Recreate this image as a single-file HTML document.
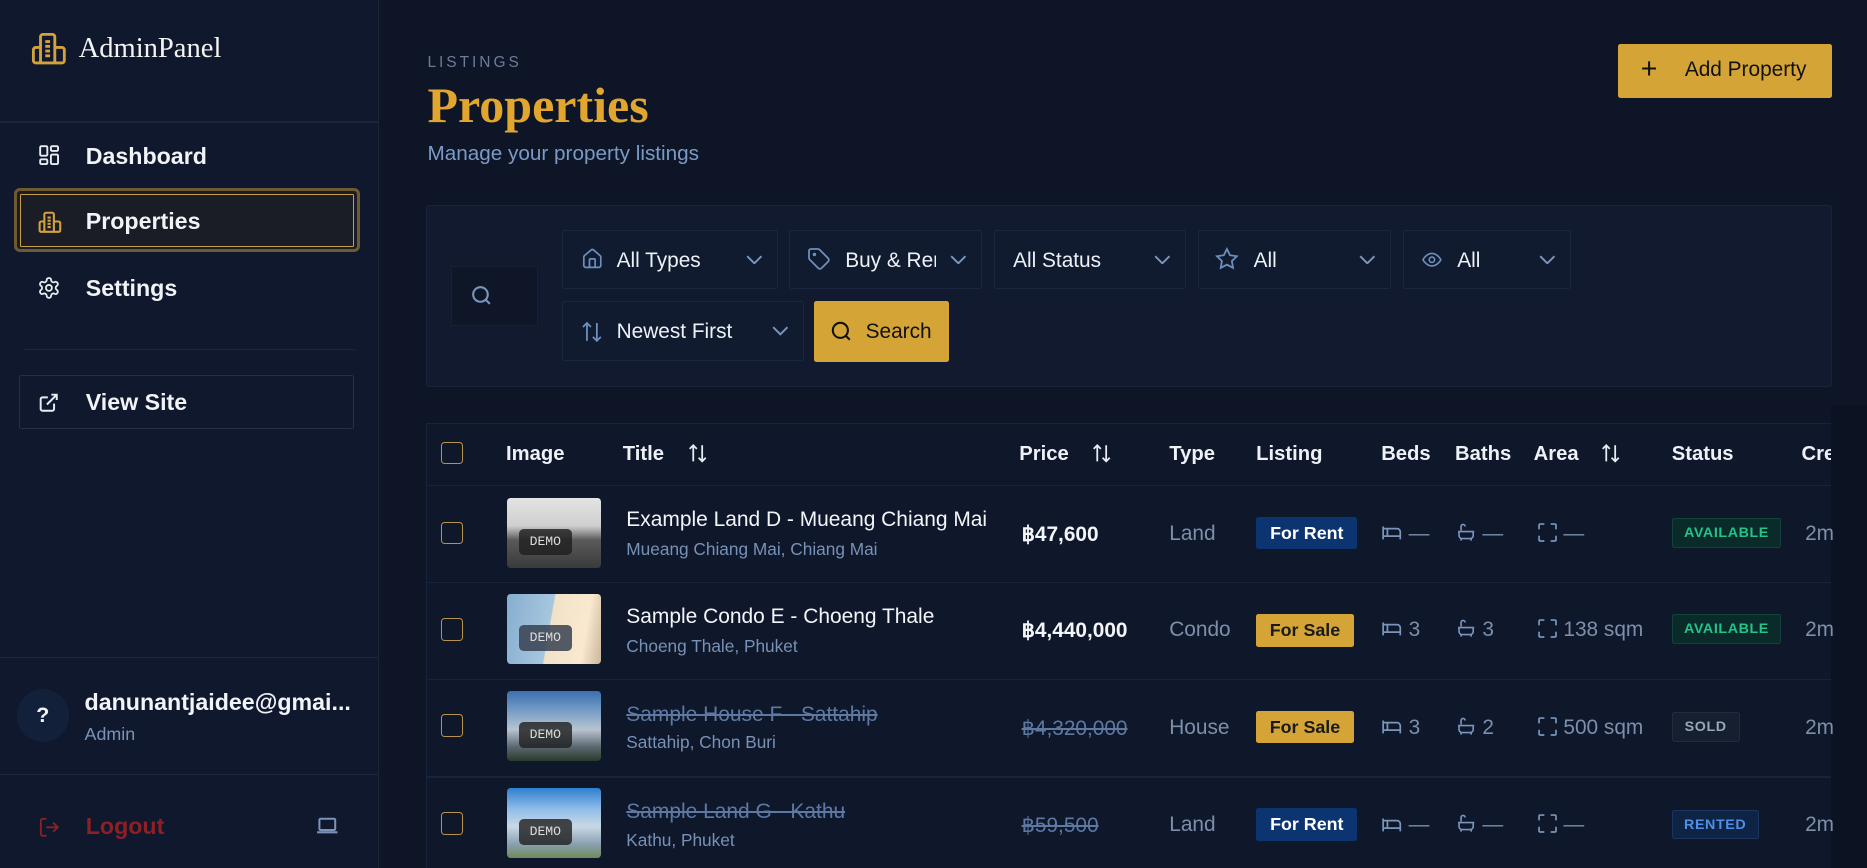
<!DOCTYPE html>
<html><head><meta charset="utf-8"><style>
html{zoom:1.19069}
*{box-sizing:border-box;margin:0;padding:0}
body{width:1568px;height:729px;overflow:hidden;background:#0d1527;font-family:"Liberation Sans",sans-serif;color:#f1f4f9;position:relative}
.a{position:absolute}
.side{left:0;top:0;width:318px;height:729px;background:#0f182c;border-right:1px solid #1b2539}
.hr{position:absolute;height:1px;background:#1c2639}
.nav{position:absolute;left:72px;font-size:19.5px;font-weight:bold;color:#f1f3f7}
.ic{position:absolute}
.mut{color:#7b93b8}
.dd{position:absolute;height:50px;border:1px solid #1b2640;background:#111b30;border-radius:2px;font-size:17.5px;color:#eef2f8}
.dd span{position:absolute;top:15px}
.dd svg.ch{position:absolute;right:12px;top:20px}
.th{position:absolute;top:372px;font-size:17px;font-weight:bold;color:#eef2f8}
.cb{position:absolute;left:370px;width:19px;height:19px;border:1.5px solid #b8914a;border-radius:3px}
.thumb{position:absolute;left:426px;width:79px;height:59px;border-radius:3px;overflow:hidden}
.demo{position:absolute;left:10px;top:26px;width:44px;height:22px;background:rgba(30,30,30,.8);border-radius:4px;color:#ddd;font-family:"Liberation Mono",monospace;font-size:11px;text-align:center;line-height:22px}
.t1{position:absolute;left:526px;font-size:17.6px;color:#f3f5f9}
.t2{position:absolute;left:526px;font-size:14.5px;color:#7891b6}
.pr{position:absolute;left:858px;font-size:17.5px;font-weight:bold;color:#f3f5f9}
.strike{text-decoration:line-through;color:#5d79a3 !important;font-weight:normal}
.ty{position:absolute;left:982px;font-size:17.5px;color:#7d8fab}
.lb{position:absolute;left:1055px;height:27px;border-radius:2px;font-size:15px;font-weight:bold;line-height:27px;text-align:center}
.rent{background:#0b3470;color:#fff;width:85px}
.sale{background:#d4a437;color:#1a1a1a;width:82px}
.val{position:absolute;font-size:17.5px;color:#7d8fab}
.st{position:absolute;left:1404px;height:25px;border-radius:2px;font-size:12px;font-weight:bold;line-height:25px;text-align:center;letter-spacing:.5px}
.cr{position:absolute;left:1516px;font-size:17.5px;color:#7d8fab}
.rowline{position:absolute;left:358px;width:1180px;height:1px;background:#19233a}
</style></head><body>
<div class="a side"></div>
<svg class="ic" style="left:26px;top:27px" width="30" height="28" viewBox="0 0 30 28" fill="none" stroke="#d3a23d" stroke-width="2.4" stroke-linejoin="round"><path d="M8 26V4a2 2 0 0 1 2-2h8a2 2 0 0 1 2 2v22"/><path d="M8 13H4a2 2 0 0 0-2 2v9a2 2 0 0 0 2 2h22a2 2 0 0 0 2-2v-9a2 2 0 0 0-2-2h-6"/><path d="M12 8h4M12 12h4M12 16h4M12 20h4"/></svg>
<div class="a" style="left:66px;top:28px;font-family:'Liberation Serif',serif;font-size:24px;color:#f3f3f3">AdminPanel</div>
<div class="hr" style="left:0;top:102px;width:318px"></div>
<svg class="ic" style="left:33px;top:122px" width="17" height="17" viewBox="0 0 17 17" fill="none" stroke="#e8ecf3" stroke-width="1.6"><rect x="1" y="1" width="6" height="8" rx="1"/><rect x="10" y="1" width="6" height="4" rx="1"/><rect x="10" y="8" width="6" height="8" rx="1"/><rect x="1" y="12" width="6" height="4" rx="1"/></svg>
<div class="nav" style="top:120px">Dashboard</div>
<div class="a" style="left:12px;top:158px;width:290px;height:54px;border:3px solid #6d5a30;border-radius:5px;background:#1a1d26"><div style="position:absolute;inset:2px;border:1px solid #c9a04a;border-radius:1px"></div></div>
<svg class="ic" style="left:32px;top:177px" width="20" height="19" viewBox="0 0 30 28" fill="none" stroke="#d3a23d" stroke-width="2.6"><path d="M8 26V4a2 2 0 0 1 2-2h8a2 2 0 0 1 2 2v22"/><path d="M8 13H4a2 2 0 0 0-2 2v9a2 2 0 0 0 2 2h22a2 2 0 0 0 2-2v-9a2 2 0 0 0-2-2h-6"/><path d="M12 8h4M12 12h4M12 16h4M12 20h4"/></svg>
<div class="nav" style="top:175px">Properties</div>
<svg class="ic" style="left:31px;top:232px" width="20" height="20" viewBox="0 0 24 24" fill="none" stroke="#e8ecf3" stroke-width="1.8"><path d="M12.22 2h-.44a2 2 0 0 0-2 2v.18a2 2 0 0 1-1 1.73l-.43.25a2 2 0 0 1-2 0l-.15-.08a2 2 0 0 0-2.73.73l-.22.38a2 2 0 0 0 .73 2.73l.15.1a2 2 0 0 1 1 1.72v.51a2 2 0 0 1-1 1.740l-.15.09a2 2 0 0 0-.73 2.73l.22.38a2 2 0 0 0 2.73.73l.15-.08a2 2 0 0 1 2 0l.43.25a2 2 0 0 1 1 1.73V20a2 2 0 0 0 2 2h.44a2 2 0 0 0 2-2v-.18a2 2 0 0 1 1-1.73l.43-.25a2 2 0 0 1 2 0l.15.08a2 2 0 0 0 2.73-.73l.22-.39a2 2 0 0 0-.73-2.73l-.15-.08a2 2 0 0 1-1-1.74v-.5a2 2 0 0 1 1-1.74l.15-.09a2 2 0 0 0 .73-2.73l-.22-.38a2 2 0 0 0-2.730-.73l-.15.08a2 2 0 0 1-2 0l-.43-.25a2 2 0 0 1-1-1.73V4a2 2 0 0 0-2-2z"/><circle cx="12" cy="12" r="3"/></svg>
<div class="nav" style="top:231px">Settings</div>
<div class="hr" style="left:20px;top:293px;width:278px"></div>
<div class="a" style="left:16px;top:315px;width:281px;height:45px;border:1px solid #253047;border-radius:2px"></div>
<svg class="ic" style="left:32px;top:329px" width="18" height="18" viewBox="0 0 24 24" fill="none" stroke="#e8ecf3" stroke-width="2.2"><path d="M15 3h6v6M10 14 21 3M18 13v6a2 2 0 0 1-2 2H5a2 2 0 0 1-2-2V8a2 2 0 0 1 2-2h6"/></svg>
<div class="nav" style="top:327px">View Site</div>
<div class="hr" style="left:0;top:552px;width:318px"></div>
<div class="a" style="left:14px;top:579px;width:44px;height:44px;border-radius:50%;background:#13203a;text-align:center;line-height:44px;font-weight:bold;font-size:18px">?</div>
<div class="a" style="left:71px;top:579px;font-size:19.5px;font-weight:bold">danunantjaidee@gmai...</div>
<div class="a mut" style="left:71px;top:608px;font-size:15px">Admin</div>
<div class="hr" style="left:0;top:650px;width:318px"></div>
<svg class="ic" style="left:32px;top:685px" width="19" height="19" viewBox="0 0 24 24" fill="none" stroke="#8e1f24" stroke-width="2"><path d="M9 21H5a2 2 0 0 1-2-2V5a2 2 0 0 1 2-2h4M16 17l5-5-5-5M21 12H9"/></svg>
<div class="a" style="left:72px;top:683px;font-size:19.5px;font-weight:bold;color:#8e1f24">Logout</div>
<svg class="ic" style="left:265px;top:685px" width="19" height="16" viewBox="0 0 20 16" fill="none" stroke="#7b93b8" stroke-width="1.8"><rect x="3" y="2" width="14" height="10" rx="1"/><path d="M1 14h18"/></svg>

<div class="a" style="left:359px;top:45px;font-size:13px;letter-spacing:2.5px;color:#6b7b98">LISTINGS</div>
<div class="a" style="left:359px;top:64px;font-family:'Liberation Serif',serif;font-weight:bold;font-size:42px;color:#e2a62f">Properties</div>
<div class="a" style="left:359px;top:119px;font-size:17.4px;color:#7b9bc6">Manage your property listings</div>
<div class="a" style="left:1359px;top:37px;width:180px;height:45px;background:#d4a437;border-radius:2px;color:#111;font-size:17.5px"><span style="position:absolute;left:19px;top:9px;font-size:24px;line-height:24px">+</span><span style="position:absolute;left:56px;top:12px">Add Property</span></div>

<div class="a" style="left:358px;top:172px;width:1181px;height:153px;background:#111a2e;border:1px solid #19233a;border-radius:2px"></div>
<div class="a" style="left:379px;top:223px;width:73px;height:51px;background:#0e1628;border:1px solid #162036"></div>
<svg class="ic" style="left:394px;top:238px" width="21" height="21" viewBox="0 0 24 24" fill="none" stroke="#7a96bd" stroke-width="2"><circle cx="11" cy="11" r="7"/><path d="m20 20-4-4"/></svg>
<svg width="0" height="0" style="position:absolute"><defs><symbol id="chev" viewBox="0 0 14 8"><path d="M1 1l6 6 6-6" fill="none" stroke="#7a96bd" stroke-width="1.6"/></symbol></defs></svg>
<div class="dd" style="left:472px;top:193px;width:181px"><svg class="ic" style="left:15px;top:14px" width="19" height="20" viewBox="0 0 24 24" fill="none" stroke="#6d8fbd" stroke-width="1.8"><path d="M15 21v-8a1 1 0 0 0-1-1h-4a1 1 0 0 0-1 1v8"/><path d="M3 10a2 2 0 0 1 .7-1.5l7-6a2 2 0 0 1 2.6 0l7 6A2 2 0 0 1 21 10v9a2 2 0 0 1-2 2H5a2 2 0 0 1-2-2z"/></svg><span style="left:45px">All Types</span><svg class="ch" width="14" height="8"><use href="#chev"/></svg></div>
<div class="dd" style="left:663px;top:193px;width:162px"><svg class="ic" style="left:14px;top:14px" width="20" height="20" viewBox="0 0 24 24" fill="none" stroke="#6d8fbd" stroke-width="1.8"><path d="M12.6 2.6A2 2 0 0 0 11.2 2H4a2 2 0 0 0-2 2v7.2a2 2 0 0 0 .6 1.4l8.7 8.7a2.4 2.4 0 0 0 3.4 0l6.6-6.6a2.4 2.4 0 0 0 0-3.4z"/><circle cx="7.5" cy="7.5" r=".8"/></svg><span style="left:46px;width:76px;overflow:hidden;white-space:nowrap">Buy &amp; Rent</span><svg class="ch" width="14" height="8"><use href="#chev"/></svg></div>
<div class="dd" style="left:835px;top:193px;width:161px"><span style="left:15px">All Status</span><svg class="ch" width="14" height="8"><use href="#chev"/></svg></div>
<div class="dd" style="left:1006px;top:193px;width:162px"><svg class="ic" style="left:14px;top:14px" width="20" height="20" viewBox="0 0 24 24" fill="none" stroke="#6d8fbd" stroke-width="1.8"><path d="M12 2l3.1 6.3 6.9 1-5 4.9 1.2 6.8L12 17.8 5.8 21l1.2-6.8-5-4.9 6.9-1z"/></svg><span style="left:46px">All</span><svg class="ch" width="14" height="8"><use href="#chev"/></svg></div>
<div class="dd" style="left:1178px;top:193px;width:141px"><svg class="ic" style="left:14px;top:15px" width="20" height="18" viewBox="0 0 24 24" fill="none" stroke="#6d8fbd" stroke-width="1.8"><path d="M2 12s3.6-7 10-7 10 7 10 7-3.6 7-10 7S2 12 2 12z"/><circle cx="12" cy="12" r="3"/></svg><span style="left:45px">All</span><svg class="ch" width="14" height="8"><use href="#chev"/></svg></div>
<div class="dd" style="left:472px;top:253px;width:203px"><svg class="ic" style="left:14px;top:15px" width="20" height="20" viewBox="0 0 24 24" fill="none" stroke="#6d8fbd" stroke-width="1.8"><path d="M7 21V3M3 7l4-4 4 4M17 3v18M13 17l4 4 4-4"/></svg><span style="left:45px">Newest First</span><svg class="ch" width="14" height="8"><use href="#chev"/></svg></div>
<div class="a" style="left:684px;top:253px;width:113px;height:51px;background:#d4a437;border-radius:2px;color:#111;font-size:17.5px"><svg class="ic" style="left:13px;top:16px" width="19" height="19" viewBox="0 0 24 24" fill="none" stroke="#111" stroke-width="2.2"><circle cx="11" cy="11" r="8"/><path d="m21 21-4.3-4.3"/></svg><span style="position:absolute;left:43px;top:16px">Search</span></div>

<div class="a" style="left:1538px;top:340px;width:30px;height:389px;background:#0b1221"></div>
<div class="a" style="left:358px;top:355px;width:1180px;height:374px;background:#0f172b;border:1px solid #19233a;border-right:none;border-bottom:none"></div>
<div class="cb" style="top:371px"></div>
<div class="th" style="left:425px">Image</div>
<div class="th" style="left:523px">Title</div>
<div class="th" style="left:856px">Price</div>
<div class="th" style="left:982px">Type</div>
<div class="th" style="left:1055px">Listing</div>
<div class="th" style="left:1160px">Beds</div>
<div class="th" style="left:1222px">Baths</div>
<div class="th" style="left:1288px">Area</div>
<div class="th" style="left:1404px">Status</div>
<div class="th" style="left:1513px;width:25px;overflow:hidden;white-space:nowrap">Created</div>
<svg class="ic" style="left:577px;top:371px" width="18" height="19" viewBox="0 0 24 24" fill="none" stroke="#e8ecf3" stroke-width="2"><path d="M7 21V3M3 7l4-4 4 4M17 3v18M13 17l4 4 4-4"/></svg>
<svg class="ic" style="left:916px;top:371px" width="18" height="19" viewBox="0 0 24 24" fill="none" stroke="#e8ecf3" stroke-width="2"><path d="M7 21V3M3 7l4-4 4 4M17 3v18M13 17l4 4 4-4"/></svg>
<svg class="ic" style="left:1344px;top:371px" width="18" height="19" viewBox="0 0 24 24" fill="none" stroke="#e8ecf3" stroke-width="2"><path d="M7 21V3M3 7l4-4 4 4M17 3v18M13 17l4 4 4-4"/></svg>
<div class="rowline" style="top:407px"></div>
<div class="rowline" style="top:489px"></div>
<div class="rowline" style="top:570px"></div>
<div class="rowline" style="top:652px"></div>

<svg width="0" height="0" style="position:absolute"><defs>
<symbol id="bed" viewBox="0 0 20 16"><path d="M2 2v12M2 4h13a3 3 0 0 1 3 3v7M2 11h16M6 4v7" fill="none" stroke="#7a96bd" stroke-width="1.6"/></symbol>
<symbol id="bath" viewBox="0 0 20 18"><path d="M5 8V4a2 2 0 0 1 4 0M2 9h16M3 9v4a3 3 0 0 0 3 3h8a3 3 0 0 0 3-3V9M5 16v2M15 16v2" fill="none" stroke="#7a96bd" stroke-width="1.6"/></symbol>
<symbol id="area" viewBox="0 0 18 18"><path d="M1 6V2a1 1 0 0 1 1-1h4M12 1h4a1 1 0 0 1 1 1v4M17 12v4a1 1 0 0 1-1 1h-4M6 17H2a1 1 0 0 1-1-1v-4" fill="none" stroke="#7a96bd" stroke-width="1.6"/></symbol>
</defs></svg>

<div class="cb" style="top:438px"></div>
<div class="thumb" style="top:418px;background:linear-gradient(#e4e4e4 0%,#cfcfcf 40%,#5a5a5a 60%,#3a3a3a 100%)"><div class="demo">DEMO</div></div>
<div class="t1" style="top:427px">Example Land D - Mueang Chiang Mai</div>
<div class="t2" style="top:453px">Mueang Chiang Mai, Chiang Mai</div>
<div class="pr" style="top:438px">฿47,600</div>
<div class="ty" style="top:438px">Land</div>
<div class="lb rent" style="top:434px">For Rent</div>
<svg class="ic" style="left:1160px;top:440px" width="18" height="15"><use href="#bed"/></svg><div class="val" style="left:1183px;top:438px">—</div>
<svg class="ic" style="left:1223px;top:438px" width="17" height="16"><use href="#bath"/></svg><div class="val" style="left:1245px;top:438px">—</div>
<svg class="ic" style="left:1292px;top:439px" width="16" height="16"><use href="#area"/></svg><div class="val" style="left:1313px;top:438px">—</div>
<div class="st" style="top:435px;width:92px;background:#0b2a2a;border:1px solid #124239;color:#20c58a">AVAILABLE</div>
<div class="cr" style="top:438px">2m</div>

<div class="cb" style="top:519px"></div>
<div class="thumb" style="top:499px;background:linear-gradient(100deg,#86aed0 0%,#a8c6de 45%,#f0e2c8 46%,#fae9d0 80%,#c9b59a 100%)"><div class="demo" style="background:rgba(55,65,80,.85)">DEMO</div></div>
<div class="t1" style="top:508px">Sample Condo E - Choeng Thale</div>
<div class="t2" style="top:534px">Choeng Thale, Phuket</div>
<div class="pr" style="top:519px">฿4,440,000</div>
<div class="ty" style="top:519px">Condo</div>
<div class="lb sale" style="top:516px">For Sale</div>
<svg class="ic" style="left:1160px;top:521px" width="18" height="15"><use href="#bed"/></svg><div class="val" style="left:1183px;top:519px">3</div>
<svg class="ic" style="left:1223px;top:519px" width="17" height="16"><use href="#bath"/></svg><div class="val" style="left:1245px;top:519px">3</div>
<svg class="ic" style="left:1292px;top:520px" width="16" height="16"><use href="#area"/></svg><div class="val" style="left:1313px;top:519px">138 sqm</div>
<div class="st" style="top:516px;width:92px;background:#0b2a2a;border:1px solid #124239;color:#20c58a">AVAILABLE</div>
<div class="cr" style="top:519px">2m</div>

<div class="cb" style="top:600px"></div>
<div class="thumb" style="top:580px;background:linear-gradient(#3b6fae 0%,#7aa0c8 30%,#b8c4d0 55%,#5b6770 80%,#2a3a2a 100%)"><div class="demo">DEMO</div></div>
<div class="t1 strike" style="top:590px">Sample House F - Sattahip</div>
<div class="t2" style="top:615px">Sattahip, Chon Buri</div>
<div class="pr strike" style="top:601px">฿4,320,000</div>
<div class="ty" style="top:601px">House</div>
<div class="lb sale" style="top:597px">For Sale</div>
<svg class="ic" style="left:1160px;top:603px" width="18" height="15"><use href="#bed"/></svg><div class="val" style="left:1183px;top:601px">3</div>
<svg class="ic" style="left:1223px;top:601px" width="17" height="16"><use href="#bath"/></svg><div class="val" style="left:1245px;top:601px">2</div>
<svg class="ic" style="left:1292px;top:602px" width="16" height="16"><use href="#area"/></svg><div class="val" style="left:1313px;top:601px">500 sqm</div>
<div class="st" style="top:598px;width:57px;background:#161f30;border:1px solid #222c3e;color:#9aa6b8">SOLD</div>
<div class="cr" style="top:601px">2m</div>

<div class="cb" style="top:682px"></div>
<div class="thumb" style="top:662px;background:linear-gradient(#2f7fd0 0%,#8fbde8 30%,#c9d8e6 55%,#8aa0b0 80%,#6f8a5a 100%)"><div class="demo">DEMO</div></div>
<div class="t1 strike" style="top:672px">Sample Land G - Kathu</div>
<div class="t2" style="top:697px">Kathu, Phuket</div>
<div class="pr strike" style="top:683px">฿59,500</div>
<div class="ty" style="top:683px">Land</div>
<div class="lb rent" style="top:679px">For Rent</div>
<svg class="ic" style="left:1160px;top:685px" width="18" height="15"><use href="#bed"/></svg><div class="val" style="left:1183px;top:683px">—</div>
<svg class="ic" style="left:1223px;top:683px" width="17" height="16"><use href="#bath"/></svg><div class="val" style="left:1245px;top:683px">—</div>
<svg class="ic" style="left:1292px;top:684px" width="16" height="16"><use href="#area"/></svg><div class="val" style="left:1313px;top:683px">—</div>
<div class="st" style="top:680px;width:73px;background:#0f2444;border:1px solid #1a3560;color:#4f8fe6">RENTED</div>
<div class="cr" style="top:683px">2m</div>
</body></html>
